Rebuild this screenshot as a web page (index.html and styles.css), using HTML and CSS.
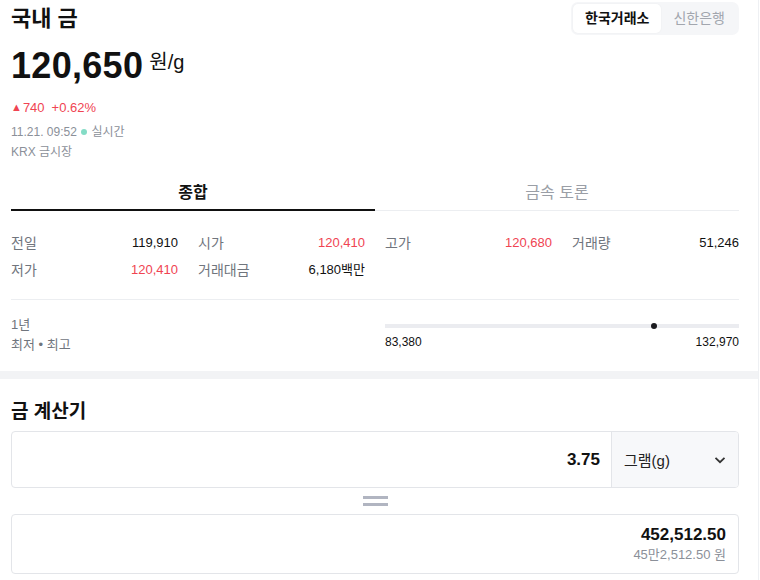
FILE: index.html
```html
<!DOCTYPE html>
<html lang="ko">
<head>
    <meta charset="UTF-8">
    <meta name="viewport" content="width=device-width, initial-scale=1.0">
    <title>국내 금</title>
    <link rel="stylesheet" href="styles.css">
</head>
<body>
<div class="page">
    <section class="quote">
        <div class="quote-head">
            <h1>국내 금</h1>
            <div class="market-switch">
                <span class="on">한국거래소</span>
                <span>신한은행</span>
            </div>
        </div>
        <div class="price">
            <strong>120,650</strong>
            <span class="unit">원/g</span>
        </div>
        <div class="change"><span class="tri">&#9650;</span>740<span class="pct">+0.62%</span></div>
        <div class="meta">11.21. 09:52 <span class="live-dot"></span> 실시간</div>
        <div class="meta">KRX 금시장</div>
    </section>

    <nav class="tabs">
        <span class="tab on">종합</span>
        <span class="tab">금속 토론</span>
    </nav>

    <div class="stats">
        <div class="stat"><span class="lbl">전일</span><span class="val">119,910</span></div>
        <div class="stat"><span class="lbl">시가</span><span class="val up">120,410</span></div>
        <div class="stat"><span class="lbl">고가</span><span class="val up">120,680</span></div>
        <div class="stat"><span class="lbl">거래량</span><span class="val">51,246</span></div>
        <div class="stat"><span class="lbl">저가</span><span class="val up">120,410</span></div>
        <div class="stat"><span class="lbl">거래대금</span><span class="val">6,180백만</span></div>
    </div>

    <div class="range">
        <div class="range-lbl">1년<br>최저 &bull; 최고</div>
        <div class="range-box">
            <div class="range-bar"><span class="range-dot" style="left: 75.9%"></span></div>
            <div class="range-ends"><span>83,380</span><span>132,970</span></div>
        </div>
    </div>

    <div class="band"></div>

    <section class="calc">
        <h2>금 계산기</h2>
        <div class="calc-input">
            <div class="amount">3.75</div>
            <div class="unit-select">
                <span>그램(g)</span>
                <svg width="14" height="14" viewBox="0 0 14 14"><path d="M2.5 4.8 L7 9.2 L11.5 4.8" fill="none" stroke="#333" stroke-width="1.8"/></svg>
            </div>
        </div>
        <div class="equals"><span></span><span></span></div>
        <div class="calc-result">
            <div class="won">452,512.50</div>
            <div class="won-kr">45만2,512.50 원</div>
        </div>
    </section>
</div>
</body>
</html>
```

FILE: styles.css
```css
*{margin:0;padding:0;box-sizing:border-box}
body{
    background-color:#fff;
    font-family:"Liberation Sans","Noto Sans CJK KR",sans-serif;
    color:#111;
}
.page{
    width:759px;
    min-height:580px;
    border-right:1px solid #eef0f3;
}

/* top quote */
.quote{
    padding:3px 19px 0 11px;
}
.quote-head{
    display:flex;
    justify-content:space-between;
    align-items:flex-start;
}
h1{
    font-size:22px;
    font-weight:bold;
    line-height:32px;
    color:#111;
}
.market-switch{
    display:flex;
    background-color:#f5f6f8;
    border-radius:7px;
    padding:2px;
    margin-top:-1px;
    font-size:14px;
}
.market-switch span{
    padding:0 12px;
    line-height:29px;
    color:#a2a6ae;
    border-radius:5px;
}
.market-switch .on{
    background-color:#fff;
    color:#111;
    font-weight:bold;
    box-shadow:0 0 2px rgba(0,0,0,0.05);
}
.price{
    display:flex;
    align-items:flex-start;
    margin-top:11px;
}
.price strong{
    font-size:36px;
    line-height:40px;
    letter-spacing:0.3px;
}
.unit{
    font-size:20px;
    margin:4px 0 0 6px;
    line-height:24px;
}
.change{
    margin-top:13px;
    font-size:13px;
    color:#f04452;
    line-height:18px;
}
.tri{
    font-size:11px;
    margin-right:1px;
    position:relative;
    top:-1px;
}
.pct{margin-left:7px}
.meta{
    font-size:12px;
    color:#8b9099;
    line-height:20px;
}
.change + .meta{margin-top:5px}
.live-dot{
    display:inline-block;
    width:6px;
    height:6px;
    border-radius:50%;
    background-color:#84dcc6;
    margin:0 1px 1px 1px;
}

/* tabs */
.tabs{
    display:flex;
    margin:9px 19px 0 11px;
    border-bottom:1px solid #eceef1;
}
.tab{
    flex:1;
    text-align:center;
    font-size:16px;
    line-height:20px;
    padding:12px 0 6px;
    color:#9a9ea6;
}
.tab.on{
    color:#111;
    font-weight:bold;
    border-bottom:2px solid #111;
    margin-bottom:-1px;
}

/* stats */
.stats{
    display:grid;
    grid-template-columns:repeat(4,1fr);
    column-gap:20px;
    row-gap:7px;
    margin:0 19px 0 11px;
    padding:22px 0 19px;
    border-bottom:1px solid #eceef1;
}
.stat{
    display:flex;
    justify-content:space-between;
    align-items:center;
    line-height:20px;
}
.lbl{
    font-size:14px;
    color:#70757d;
}
.val{
    font-size:13px;
    color:#111;
}
.val.up{color:#f04452}

/* range */
.range{
    display:grid;
    grid-template-columns:1fr 1fr;
    column-gap:20px;
    margin:0 19px 0 11px;
    padding:15px 0 16px;
}
.range-lbl{
    font-size:13px;
    color:#70757d;
    line-height:20px;
}
.range-box{padding-top:9px}
.range-bar{
    position:relative;
    height:4px;
    background-color:#ebecf0;
}
.range-dot{
    position:absolute;
    top:-1px;
    width:6px;
    height:6px;
    margin-left:-3px;
    border-radius:50%;
    background-color:#1b1b1f;
}
.range-ends{
    display:flex;
    justify-content:space-between;
    font-size:12px;
    line-height:16px;
    margin-top:6px;
}

.band{
    height:8px;
    background-color:#f2f3f5;
}

/* calculator */
.calc{
    padding:19px 19px 0 11px;
}
h2{
    font-size:19px;
    font-weight:bold;
    line-height:28px;
}
.calc-input{
    display:flex;
    margin-top:5px;
    height:57px;
    border:1px solid #e3e5e9;
    border-radius:4px;
    overflow:hidden;
}
.amount{
    flex:1;
    display:flex;
    align-items:center;
    justify-content:flex-end;
    padding-right:11px;
    font-size:17px;
    font-weight:bold;
}
.unit-select{
    width:127px;
    display:flex;
    align-items:center;
    justify-content:space-between;
    padding:0 11px 0 12px;
    background-color:#f7f8fa;
    border-left:1px solid #e3e5e9;
    font-size:15px;
    color:#222;
}
.unit-select svg{display:block}
.equals{
    display:flex;
    flex-direction:column;
    align-items:center;
    gap:4px;
    padding:8px 0 8px;
}
.equals span{
    width:25px;
    height:3px;
    background-color:#b1b5c1;
}
.calc-result{
    border:1px solid #e3e5e9;
    border-radius:4px;
    height:60px;
    padding:9px 12px 0;
    text-align:right;
}
.won{
    font-size:17px;
    font-weight:bold;
    line-height:22px;
}
.won-kr{
    font-size:13px;
    color:#8b9099;
    line-height:18px;
}
```
